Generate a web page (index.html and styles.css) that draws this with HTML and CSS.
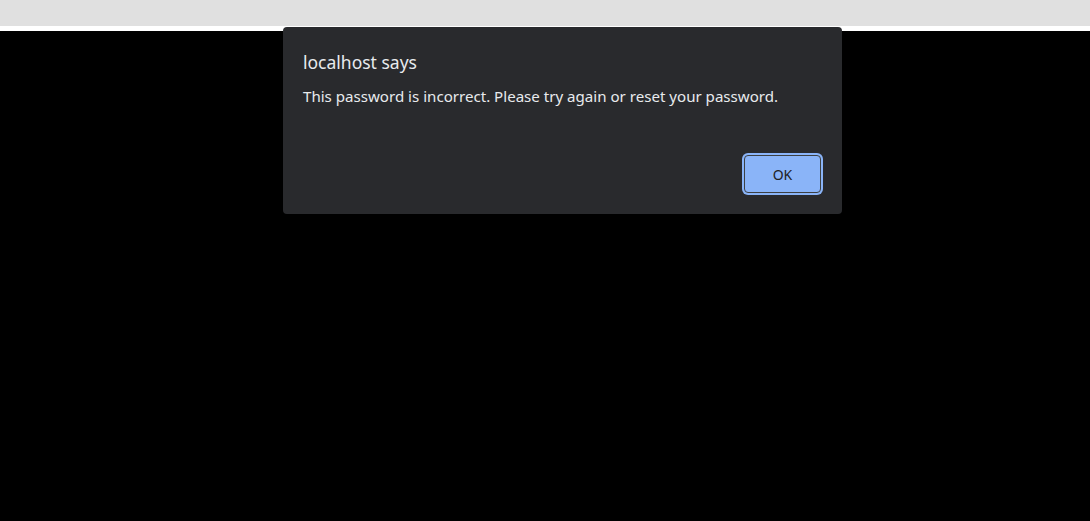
FILE: index.html
```html
<!DOCTYPE html>
<html>
<head>
<meta charset="utf-8">
<link rel="stylesheet" href="styles.css">
</head>
<body>
<div class="topbar"></div>
<div class="strip"></div>
<div class="page"></div>
<div class="dialog" role="alertdialog">
  <div class="title">localhost says</div>
  <div class="message">This password is incorrect. Please try again or reset your password.</div>
  <div class="actions">
    <button class="ok">OK</button>
  </div>
</div>
</body>
</html>
```

FILE: styles.css
```css
html, body {
  margin: 0;
  padding: 0;
  height: 100%;
  background: #000;
  overflow: hidden;
}
.topbar {
  height: 26px;
  background: #e0e0e0;
}
.strip {
  height: 5px;
  background: #fff;
}
.page {
  background: #000;
}
.dialog {
  position: absolute;
  left: 283px;
  top: 27px;
  width: 559px;
  height: 187px;
  box-sizing: border-box;
  background: #292a2d;
  border-radius: 4px;
  padding: 22px 19px 0 20px;
  display: flex;
  flex-direction: column;
  font-family: "Noto Sans", "Open Sans", sans-serif;
  color: #e8eaed;
}
.title {
  font-size: 17.5px;
  line-height: 26px;
}
.message {
  margin-top: 10px;
  font-size: 15.1px;
  line-height: 22px;
}
.actions {
  display: flex;
  justify-content: flex-end;
  margin-top: 46px;
}
.ok {
  width: 77px;
  height: 38px;
  margin: 2px;
  box-sizing: border-box;
  background: #8ab4f8;
  border: 1px solid #3c4043;
  border-radius: 4px;
  box-shadow: 0 0 0 2px #8ab4f8;
  color: #202124;
  font-family: "Noto Sans", "Open Sans", sans-serif;
  font-size: 14px;
  padding: 0;
}
```
